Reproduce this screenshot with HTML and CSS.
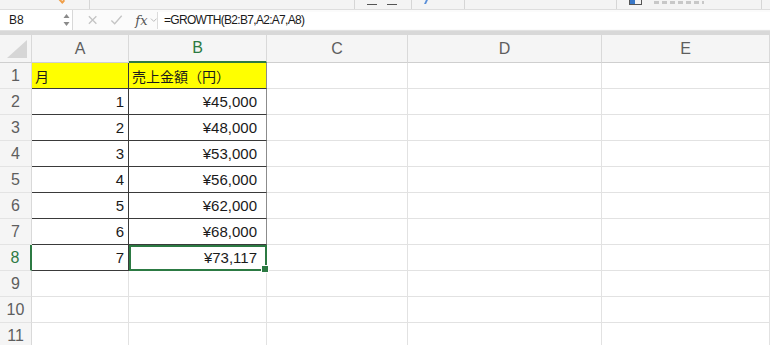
FILE: index.html
```html
<!DOCTYPE html>
<html lang="ja">
<head>
    <meta charset="UTF-8">
    <title>GROWTH</title>
    <link rel="stylesheet" href="styles.css">
</head>
<body>

    <div class="ribbon">
        <div class="seg seg1"><span class="orange-mark"></span></div>
        <div class="seg seg2"></div>
        <div class="seg seg3"><span class="dash"></span><span class="dash"></span></div>
        <div class="seg seg4"><span class="blue-stroke"></span></div>
        <div class="seg seg5"></div>
        <div class="seg seg6"><span class="blue-icon"></span><span class="ghost-text"></span></div>
        <div class="seg seg7"></div>
    </div>

    <div class="formula-bar">
        <div class="name-box">
            <span>B8</span>
            <svg class="spinner" width="7" height="14" viewBox="0 0 7 14">
                <path d="M3.5 1 L6.5 5 L0.5 5 Z" fill="#8a8a8a"/>
                <path d="M3.5 13 L6.5 9 L0.5 9 Z" fill="#8a8a8a"/>
            </svg>
        </div>
        <div class="fx-area">
            <svg width="12" height="12" viewBox="0 0 12 12">
                <path d="M2 2 L10 10 M10 2 L2 10" stroke="#c4c4c4" stroke-width="1.4" fill="none"/>
            </svg>
            <svg width="14" height="12" viewBox="0 0 14 12">
                <path d="M1.5 6.5 L5 10 L12.5 1.5" stroke="#c4c4c4" stroke-width="1.4" fill="none"/>
            </svg>
            <span class="fx">fx</span>
            <svg width="8" height="6" viewBox="0 0 8 6">
                <path d="M1 1.5 L4 4.5 L7 1.5" stroke="#b8b8b8" stroke-width="1" fill="none"/>
            </svg>
        </div>
        <div class="formula-input">=GROWTH(B2:B7,A2:A7,A8)</div>
    </div>
    <div class="bar-gap"></div>

    <div class="sheet">
        <div class="corner"><div class="tri"></div></div>
        <div class="col-head">A</div>
        <div class="col-head active">B</div>
        <div class="col-head">C</div>
        <div class="col-head">D</div>
        <div class="col-head">E</div>

        <div class="row-head">1</div>
        <div class="cell tbl col-a head-cell jp">月</div>
        <div class="cell tbl col-b head-cell jp">売上金額（円）</div>
        <div class="cell"></div><div class="cell"></div><div class="cell"></div>

        <div class="row-head">2</div>
        <div class="cell tbl col-a num">1</div>
        <div class="cell tbl col-b num yen">¥45,000</div>
        <div class="cell"></div><div class="cell"></div><div class="cell"></div>

        <div class="row-head">3</div>
        <div class="cell tbl col-a num">2</div>
        <div class="cell tbl col-b num yen">¥48,000</div>
        <div class="cell"></div><div class="cell"></div><div class="cell"></div>

        <div class="row-head">4</div>
        <div class="cell tbl col-a num">3</div>
        <div class="cell tbl col-b num yen">¥53,000</div>
        <div class="cell"></div><div class="cell"></div><div class="cell"></div>

        <div class="row-head">5</div>
        <div class="cell tbl col-a num">4</div>
        <div class="cell tbl col-b num yen">¥56,000</div>
        <div class="cell"></div><div class="cell"></div><div class="cell"></div>

        <div class="row-head">6</div>
        <div class="cell tbl col-a num">5</div>
        <div class="cell tbl col-b num yen">¥62,000</div>
        <div class="cell"></div><div class="cell"></div><div class="cell"></div>

        <div class="row-head">7</div>
        <div class="cell tbl col-a num">6</div>
        <div class="cell tbl col-b num yen">¥68,000</div>
        <div class="cell"></div><div class="cell"></div><div class="cell"></div>

        <div class="row-head active">8</div>
        <div class="cell tbl col-a num">7</div>
        <div class="cell tbl col-b num yen selected">¥73,117</div>
        <div class="cell"></div><div class="cell"></div><div class="cell"></div>

        <div class="row-head">9</div>
        <div class="cell"></div><div class="cell"></div><div class="cell"></div><div class="cell"></div><div class="cell"></div>

        <div class="row-head">10</div>
        <div class="cell"></div><div class="cell"></div><div class="cell"></div><div class="cell"></div><div class="cell"></div>

        <div class="row-head">11</div>
        <div class="cell"></div><div class="cell"></div><div class="cell"></div><div class="cell"></div><div class="cell"></div>
    </div>

</body>
</html>
```

FILE: styles.css
```css
* {
    margin: 0;
    padding: 0;
    box-sizing: border-box;
}

body {
    width: 770px;
    height: 345px;
    overflow: hidden;
    background: #ffffff;
    font-family: "Liberation Sans", "Noto Sans CJK JP", sans-serif;
    color: #1a1a1a;
}

/* ribbon leftovers at the very top */
.ribbon {
    display: flex;
    height: 10px;
    background: #f4f4f4;
    border-bottom: 1px solid #dedede;
}

.seg {
    height: 9px;
    border-right: 1px solid #d6d6d6;
    display: flex;
    align-items: flex-start;
}

.seg1 { width: 90px; }
.seg2 { width: 265px; }
.seg3 { width: 57px; padding-left: 12px; gap: 10px; }
.seg4 { width: 53px; padding-left: 12px; }
.seg5 { width: 152px; }
.seg6 { width: 145px; padding-left: 12px; gap: 12px; }
.seg7 { flex: 1; border-right: none; }

.orange-mark {
    margin-left: 58px;
    width: 5px;
    height: 4px;
    border-bottom: 2px solid #f0a04b;
    border-right: 2px solid #f0a04b;
    transform: rotate(45deg) translateY(-2px);
}

.dash {
    width: 10px;
    height: 1px;
    margin-top: 4px;
    background: #555;
}

.blue-stroke {
    width: 2px;
    height: 4px;
    margin-left: 1px;
    background: #5a8fd8;
    transform: skewX(-25deg);
}

.blue-icon {
    width: 13px;
    height: 5px;
    border: 1px solid #555;
    border-top: none;
    background: linear-gradient(90deg, #3a78c8 50%, transparent 50%);
}

.ghost-text {
    width: 50px;
    height: 3px;
    margin-top: 1px;
    background: repeating-linear-gradient(90deg, #c8c8c8 0 5px, transparent 5px 8px);
}

/* formula bar */
.formula-bar {
    display: flex;
    height: 21px;
    background: #fbfbfb;
    border-bottom: 1px solid #e2e2e2;
}

.name-box {
    width: 73px;
    display: flex;
    align-items: center;
    justify-content: space-between;
    padding: 0 2px 0 9px;
    background: #ffffff;
    border-right: 1px solid #d8d8d8;
    font-size: 12px;
}

.fx-area {
    width: 84px;
    display: flex;
    align-items: center;
    gap: 12px;
    padding-left: 14px;
}

.fx {
    font-family: "DejaVu Serif", serif;
    font-style: italic;
    font-size: 13px;
    color: #555;
    margin-right: -10px;
}

.formula-input {
    flex: 1;
    margin: 2px 0 1px;
    padding-left: 6px;
    background: #ffffff;
    border-left: 1px solid #dcdcdc;
    font-size: 12px;
    letter-spacing: -0.7px;
    line-height: 17px;
}

.bar-gap {
    height: 4px;
    background: #d8d8d8;
}

/* sheet grid */
.sheet {
    display: grid;
    grid-template-columns: 32px 97px 138px 141px 194px 168px;
    grid-template-rows: 28px;
    grid-auto-rows: 26px;
}

.corner,
.col-head,
.row-head {
    background: #f5f5f5;
    color: #5e5e5e;
    font-size: 16px;
    border-right: 1px solid #d9d9d9;
    border-bottom: 1px solid #cfcfcf;
    display: flex;
    align-items: center;
    justify-content: center;
}

.corner {
    align-items: flex-end;
    justify-content: flex-end;
    padding: 0 4px 4px 0;
}

.tri {
    width: 20px;
    height: 18px;
    background: #d6d6d6;
    clip-path: polygon(100% 0, 100% 100%, 0 100%);
}

.row-head {
    border-bottom-color: #e3e3e3;
}

.col-head.active {
    color: #2c7a43;
    border-bottom: 2px solid #2c7a43;
}

.row-head.active {
    color: #2c7a43;
    border-right: 2px solid #2c7a43;
}

.cell {
    border-right: 1px solid #e2e2e2;
    border-bottom: 1px solid #e2e2e2;
    font-size: 15px;
    display: flex;
    align-items: center;
    padding: 0 4px;
    white-space: nowrap;
}

.cell.tbl {
    border-bottom-color: #3a3a3a;
}

.cell.col-a {
    border-right-color: #3a3a3a;
}

.cell.col-b {
    border-right-color: #8c8c8c;
}

.head-cell {
    background: #ffff00;
    padding-left: 3px;
}

.jp {
    font-family: "Noto Sans CJK JP", sans-serif;
    font-size: 14px;
}

.num {
    justify-content: flex-end;
}

.yen {
    padding-right: 9px;
}

.selected {
    position: relative;
    outline: 2px solid #2c7a43;
    outline-offset: -2px;
}

.selected::after {
    content: "";
    position: absolute;
    right: -3px;
    bottom: -3px;
    width: 6px;
    height: 6px;
    background: #2c7a43;
    border: 1px solid #ffffff;
}
```
